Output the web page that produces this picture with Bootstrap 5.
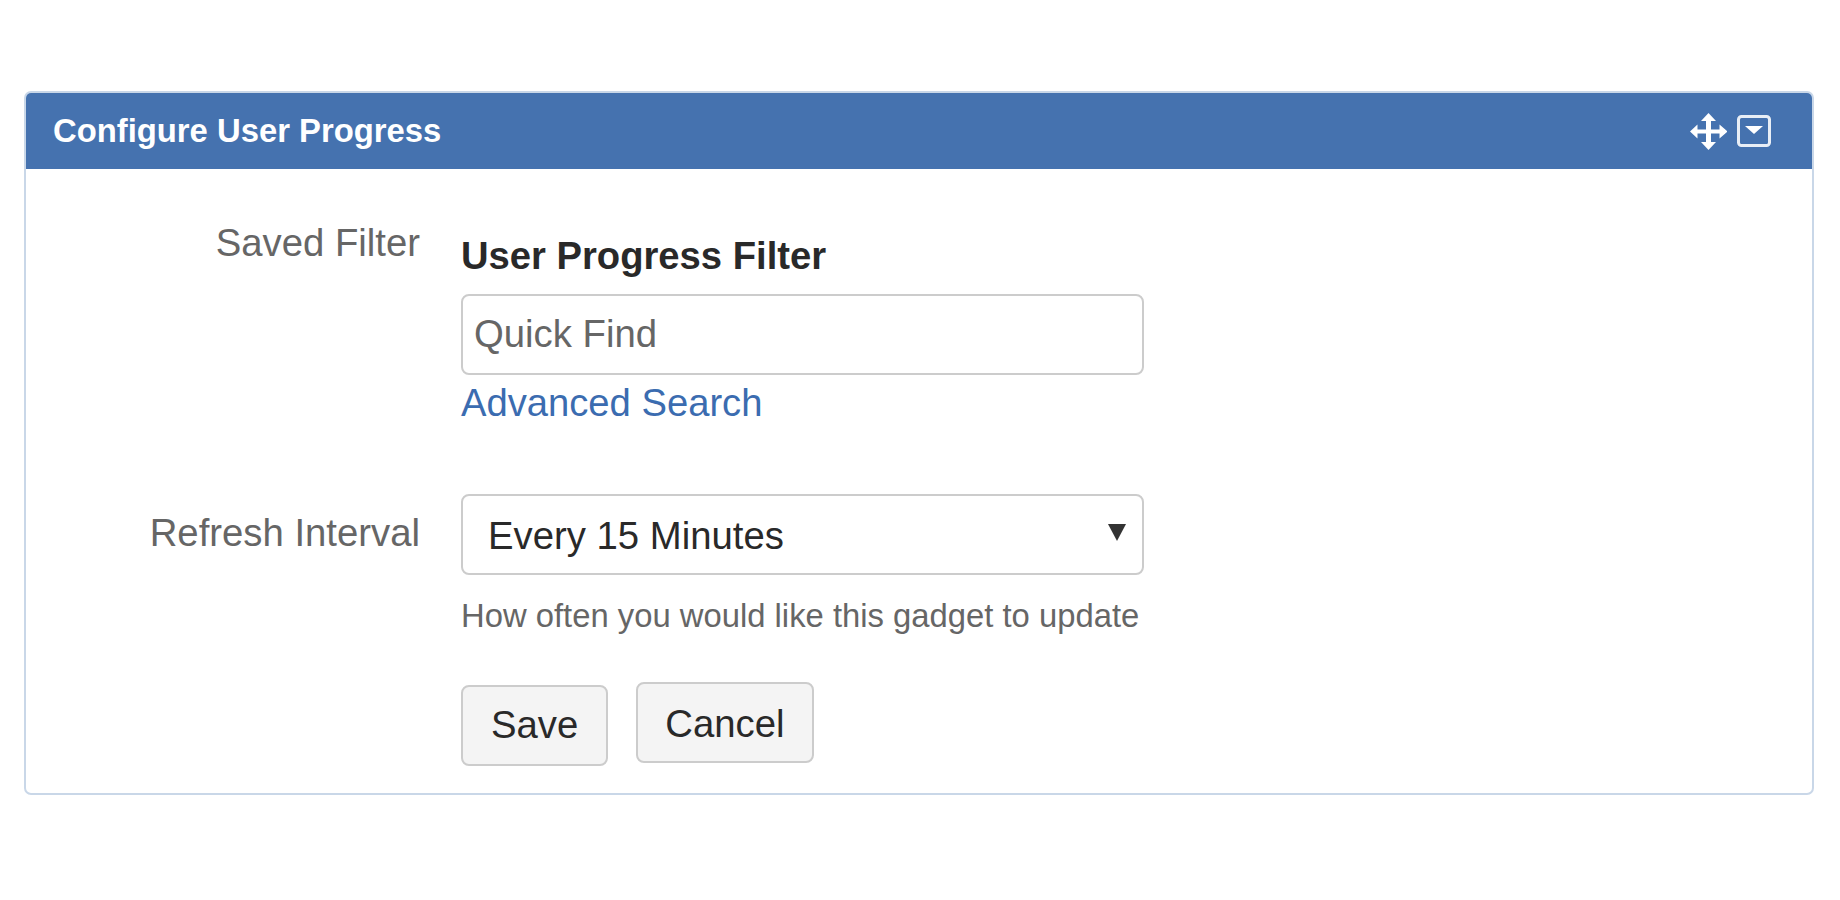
<!DOCTYPE html>
<html lang="en"><head><meta charset="utf-8"><title>Configure User Progress</title>
<link href="https://cdn.jsdelivr.net/npm/bootstrap@5.3.0/dist/css/bootstrap.min.css" rel="stylesheet">
<style>
body{background:#fff;font-family:"Liberation Sans",Arial,sans-serif;color:#333;padding:91px 26px 0 24px;overflow:hidden}
.gadget{border:2px solid #c9d7e8;border-radius:7px;height:704px;overflow:hidden}
.gadget-head{background:#4572af;color:#fff;height:76px;padding:0 41px 0 27px}
.gadget-title{font-size:32.800px;font-weight:700;margin:0;line-height:1}
.gadget-body{padding:53px 0 0}
.lbl{width:394px;text-align:right;color:#666;font-size:38.300px;line-height:42px;flex:none}
.lbl-second{padding-top:18px}
.field{width:683px;margin-left:41px}
.filter-name{font-size:38.200px;font-weight:700;line-height:40px;color:#292929;margin-top:14px;margin-bottom:18px}
.big-input,.big-select{height:81px;width:683px;border:2px solid #ccc;border-radius:8px;font-size:38.300px;color:#292929;font-family:inherit;background:#fff}
.big-input{padding:0 11px 2px}
.big-input::placeholder{color:#666;opacity:1}
.big-select{padding:2px 25px 0;display:flex;align-items:center;justify-content:space-between}
.adv{display:block;font-size:38.200px;line-height:42px;color:#3b6cb0;text-decoration:none;margin-top:7px}
.help-line{font-size:32.800px;line-height:36px;color:#666;margin-top:23px}
.big-btn{height:81px;background:#f4f4f4;border:2px solid #ccc;border-radius:8px;font-size:38.300px;color:#292929;padding:0 28px;line-height:1}
.btn-high{padding-top:4px;padding-left:27px;padding-right:27px}
.row-second{margin-top:70px}
.acts{margin-top:48px;gap:28px}
.btn-low{margin-top:3px}
.caret-mark{width:0;height:0;border-left:9px solid transparent;border-right:9px solid transparent;border-top:17px solid #333;margin-right:-9px;margin-top:-6px}
.head-icons{gap:10px}
</style></head><body>
<div class="gadget">
 <div class="gadget-head d-flex align-items-center justify-content-between">
  <h1 class="gadget-title">Configure User Progress</h1>
  <div class="d-flex align-items-center head-icons">
   <svg width="37" height="37" viewBox="0 0 37 37" fill="#fff"><path d="M18.500 0l7.500 8h-5v8.500h8.500v-5l8 7-8 7v-5H21V29h5l-7.500 8-7.500-8h5v-8.500H7.500v5l-7.500-7 7.500-7v5H16V8h-5z"/></svg>
   <svg width="34" height="32" viewBox="0 0 34 32"><rect x="1.500" y="1.500" width="31" height="29" rx="3" fill="none" stroke="#e8eef6" stroke-width="3"/><path d="M8 11h18l-9 8z" fill="#fff"/></svg>
  </div>
 </div>
 <div class="gadget-body">
  <div class="d-flex">
   <div class="lbl">Saved Filter</div>
   <div class="field">
    <div class="filter-name">User Progress Filter</div>
    <input class="big-input d-block" type="text" placeholder="Quick Find">
    <a class="adv" href="#">Advanced Search</a>
   </div>
  </div>
  <div class="d-flex row-second">
   <div class="lbl lbl-second">Refresh Interval</div>
   <div class="field">
    <div class="big-select"><span>Every 15 Minutes</span><span class="caret-mark"></span></div>
    <div class="help-line">How often you would like this gadget to update</div>
    <div class="d-flex align-items-start acts">
     <button class="big-btn btn-low" type="button">Save</button>
     <button class="big-btn btn-high" type="button">Cancel</button>
    </div>
   </div>
  </div>
 </div>
</div>
</body></html>
